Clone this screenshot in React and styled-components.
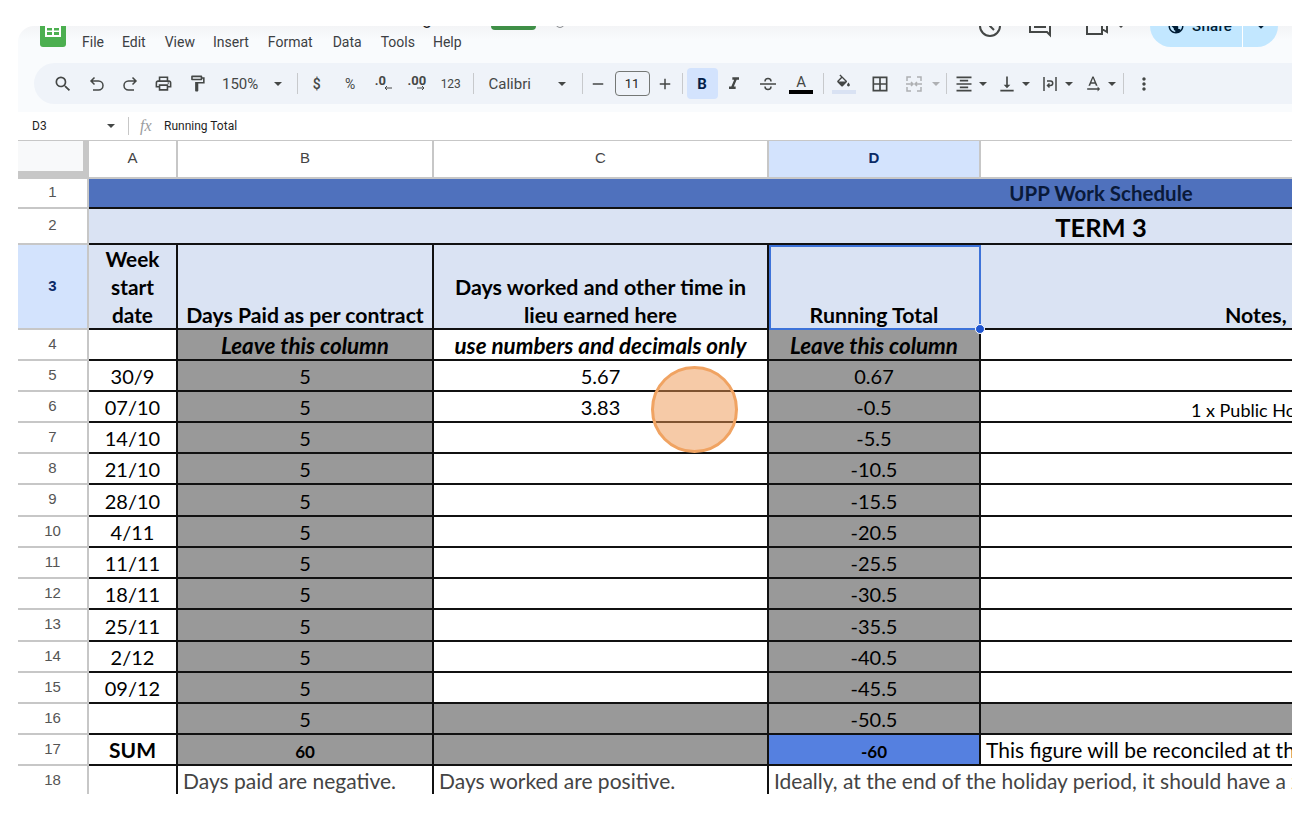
import React from "react";
import styled, { createGlobalStyle } from "styled-components";
import {
  MdSearch, MdOutlineLocalPrintshop, MdOutlineFormatPaint, MdFormatItalic,
  MdBorderAll, MdFormatAlignCenter, MdVerticalAlignBottom, MdTextRotationNone, MdMoreVert,
  MdPublic, MdArrowDropDown, MdRemove, MdAdd,
} from "react-icons/md";

const Global = createGlobalStyle`
  html, body { margin: 0; padding: 0; background: #fff; overflow: hidden; }
  * { box-sizing: border-box; }
`;

const Page = styled.div`
  width: 1292px;
  height: 816px;
  padding: 26px 0 22px 18px;
  background: #fff;
`;
const Frame = styled.div`
  width: 1274px;
  height: 768px;
  overflow: hidden;
  border-radius: 16px 0 0 16px;
  background: #fff;
  display: flex;
  flex-direction: column;
  font-family: Roboto, "Liberation Sans", sans-serif;
  color: #444746;
`;
const Chrome = styled.div`
  height: 86px;
  flex: none;
  background: linear-gradient(#f3f4f6 0, #f9fbfd 14px);
  display: flex;
  flex-direction: column;
`;
const TopBar = styled.div`
  height: 37px;
  display: flex;
  padding: 0 14px 0 22px;
`;
const Logo = styled.svg`
  width: 26px;
  height: 32px;
  margin-top: -11px;
  flex: none;
`;
const TitleBlock = styled.div`
  margin-left: 16px;
  width: 500px;
  display: flex;
  flex-direction: column;
`;
const TitleRow = styled.div`
  height: 7px;
  display: flex;
  align-items: flex-start;
`;
const DocTitle = styled.div`
  width: 350px;
  flex: none;
  margin-top: -20px;
  font-size: 18px;
  line-height: 24px;
  text-align: right;
  color: #1f1f1f;
  white-space: nowrap;
`;
const Badge = styled.div`
  width: 45px;
  height: 24px;
  flex: none;
  margin: -20px 0 0 59px;
  border-radius: 4px;
  background: #3f8f47;
`;
const StatusMark = styled.div`
  width: 10px;
  height: 12px;
  flex: none;
  margin: -10px 0 0 19px;
  border: 1px solid #8a8d90;
  border-radius: 50%;
`;
const MenuRow = styled.nav`
  display: flex;
  font-size: 14px;
  line-height: 18px;
  color: #3c4043;
`;
const MenuItem = styled.span`
  margin-right: ${(p) => p.$gap}px;
`;
const RightCluster = styled.div`
  margin-left: auto;
  height: 42px;
  margin-top: -21px;
  display: flex;
  align-items: center;
`;
const TopIcon = styled.svg`
  width: 24px;
  height: 24px;
  flex: none;
  margin-right: ${(p) => p.$gap}px;
`;
const ShareButton = styled.div`
  width: 128px;
  height: 42px;
  flex: none;
  margin-left: 25px;
  display: flex;
  border-radius: 21px;
  overflow: hidden;
  color: #001d35;
`;
const ShareMain = styled.div`
  width: 93px;
  background: #c2e7ff;
  border-right: 1px solid #fff;
  display: flex;
  align-items: center;
  padding-left: 17px;
  gap: 7px;
  font-size: 15px;
  letter-spacing: 0.3px;
  font-weight: 500;
`;
const ShareCaret = styled.div`
  flex: 1;
  background: #c2e7ff;
  display: flex;
  align-items: center;
  justify-content: center;
`;

const Toolbar = styled.div`
  height: 41px;
  margin: 0 -24px 0 16px;
  padding-left: 11px;
  background: #eff3f9;
  border-radius: 21px 0 0 21px;
  display: flex;
  align-items: center;
  flex: none;
`;
const Tool = styled.div`
  width: ${(p) => p.$w || 33.5}px;
  margin-left: ${(p) => p.$ml || 0}px;
  height: 31px;
  flex: none;
  display: flex;
  align-items: center;
  justify-content: center;
  color: ${(p) => p.$c || "#444746"};
  font-size: ${(p) => p.$fs || 14}px;
  font-weight: ${(p) => p.$fw || 400};
  position: relative;
`;
const Caret = styled.div`
  width: ${(p) => p.$w || 10}px;
  flex: none;
  display: flex;
  justify-content: center;
  &::after {
    content: "";
    border-left: 4px solid transparent;
    border-right: 4px solid transparent;
    border-top: 4.5px solid ${(p) => p.$c || "#444746"};
  }
`;
const Sep = styled.div`
  width: 1px;
  height: 21px;
  flex: none;
  background: #c7c9cc;
  margin: 0 ${(p) => p.$r}px 0 ${(p) => p.$l}px;
`;
const ToolText = styled.div`
  width: ${(p) => p.$w}px;
  margin-left: ${(p) => p.$ml}px;
  flex: none;
  font-size: 15px;
  color: #444746;
  white-space: nowrap;
`;
const FontSizeBox = styled.div`
  width: 35px;
  height: 25px;
  margin-left: 2px;
  flex: none;
  border: 1px solid #747775;
  border-radius: 4px;
  display: flex;
  align-items: center;
  justify-content: center;
  font-size: 13px;
  color: #1f1f1f;
`;
const BoldTool = styled.div`
  width: 31px;
  height: 31px;
  margin-left: 4px;
  flex: none;
  border-radius: 4px;
  background: #d3e3fd;
  color: #041e49;
  display: flex;
  align-items: center;
  justify-content: center;
  font-weight: 700;
  font-size: 15px;
`;
const ColorTool = styled.div`
  width: 33.5px;
  height: 31px;
  flex: none;
  display: flex;
  flex-direction: column;
  align-items: center;
  justify-content: center;
  font-size: 15px;
  line-height: 16px;
  color: #444746;
`;
const ColorBar = styled.div`
  width: ${(p) => p.$w}px;
  height: ${(p) => p.$h}px;
  margin-top: ${(p) => p.$mt}px;
  background: ${(p) => p.$c};
`;
const DecimalText = styled.span`
  font-size: 13px;
  font-weight: 700;
  line-height: 12px;
  margin: -5px 0 0 ${(p) => p.$ml}px;
`;
const SmallArrow = styled.svg`
  position: absolute;
  left: ${(p) => p.$x}px;
  top: 17px;
  width: 8px;
  height: 6px;
`;
const FlipIcon = styled.svg`
  transform: ${(p) => (p.$flip ? "scaleX(-1)" : "none")};
`;

const FormulaBar = styled.div`
  height: 29px;
  flex: none;
  background: #fff;
  border-bottom: 1px solid #c7c7c7;
  display: flex;
  align-items: center;
  font-size: 12px;
  color: #1f1f1f;
`;
const NameBox = styled.div`
  width: 72px;
  margin-left: 14px;
  flex: none;
`;
const FormulaSep = styled.div`
  width: 1px;
  height: 18px;
  flex: none;
  background: #c7c7c7;
  margin: 0 11px 0 10px;
`;
const FxMark = styled.span`
  font-family: "Liberation Serif", serif;
  font-style: italic;
  font-size: 16px;
  color: #9a9c9e;
  width: 24px;
  flex: none;
`;

const Sheet = styled.div`
  display: grid;
  width: 2097px;
  grid-template-columns: 71px 89px 256px 335px 212px 1134px;
  grid-template-rows: 38px 30px 36px 85px 31px 31px 31px 31px 31px 32px 31px 31px 31px 32px 31px 31px 31px 31px 31px;
  position: relative;
  font-family: Lato, Carlito, sans-serif;
  color: #000;
`;
const Corner = styled.div`
  background: #f8f9fa;
  border-right: 6px solid #c7c7c7;
  border-bottom: 8px solid #c7c7c7;
`;
const ColHead = styled.div`
  display: flex;
  align-items: center;
  justify-content: center;
  padding-bottom: 3px;
  font-family: "Liberation Sans", sans-serif;
  font-size: 15px;
  background: ${(p) => (p.$on ? "#d3e3fd" : "#fff")};
  color: ${(p) => (p.$on ? "#0b2a66" : "#444")};
  font-weight: ${(p) => (p.$on ? 700 : 400)};
  border-right: 2px solid #c7c7c7;
  border-bottom: 2px solid #c7c7c7;
`;
const RowHead = styled.div`
  display: flex;
  align-items: center;
  justify-content: center;
  padding-bottom: 3px;
  font-family: "Liberation Sans", sans-serif;
  font-size: 15px;
  background: ${(p) => (p.$on ? "#d3e3fd" : "#fff")};
  color: ${(p) => (p.$on ? "#0b2a66" : "#555")};
  font-weight: ${(p) => (p.$on ? 700 : 400)};
  border-right: 2px solid #c7c7c7;
  border-bottom: 2px solid #c7c7c7;
`;
const Cell = styled.div`
  display: flex;
  align-items: flex-end;
  justify-content: ${(p) => (p.$left ? "flex-start" : "center")};
  text-align: center;
  grid-column: ${(p) => p.$span || "auto"};
  padding-left: ${(p) => p.$pl || 0}px;
  white-space: nowrap;
  background: ${(p) => p.$bg || "#fff"};
  color: ${(p) => p.$c || "#000"};
  font-size: ${(p) => p.$fs || 20}px;
  line-height: ${(p) => p.$lh || 27}px;
  font-weight: ${(p) => (p.$b ? 700 : 400)};
  font-style: ${(p) => (p.$i ? "italic" : "normal")};
  border-right: 2px solid ${(p) => (p.$nr ? "transparent" : "#111")};
  border-bottom: 2px solid ${(p) => (p.$nb ? "transparent" : "#111")};
  overflow: hidden;
`;
const WrappedLines = styled.div`
  line-height: 28px;
  margin-bottom: -1px;
`;
const SelectedCell = styled(Cell)`
  box-shadow: inset 2px 2px 0 #3d73d9;
  border-color: #3d73d9;
  overflow: visible;
  position: relative;
`;
const FillHandle = styled.div`
  position: absolute;
  right: -6px;
  bottom: -6px;
  width: 10px;
  height: 10px;
  border-radius: 50%;
  background: #1f55cf;
  border: 1px solid #fff;
  z-index: 3;
`;
const ClickMarker = styled.div`
  position: absolute;
  left: 633px;
  top: 225px;
  width: 87px;
  height: 87px;
  border-radius: 50%;
  background: rgba(238, 150, 80, 0.5);
  border: 3px solid #f0a362;
  z-index: 4;
`;

const GREY = "#999999";
const PALE = "#dae3f3";
const weeks = [
  ["30/9", "5.67", "0.67"], ["07/10", "3.83", "-0.5"], ["14/10", "", "-5.5"], ["21/10", "", "-10.5"],
  ["28/10", "", "-15.5"], ["4/11", "", "-20.5"], ["11/11", "", "-25.5"], ["18/11", "", "-30.5"],
  ["25/11", "", "-35.5"], ["2/12", "", "-40.5"], ["09/12", "", "-45.5"],
];

const Undo = ({ flip }) => (
  <FlipIcon $flip={flip} width="18" height="18" viewBox="0 0 18 18" fill="none" stroke="#444746" strokeWidth="1.5">
    <path d="M6.5 2.5 3 6l3.5 3.500M3 6h7.500a3.700 3.700 0 0 1 0 9H5" />
  </FlipIcon>
);
const Strike = () => (
  <svg width="20" height="18" viewBox="0 0 20 18" fill="none" stroke="#444746" strokeWidth="1.500">
    <path d="M2 9h16M7 6.500a3 3 0 0 1 6 0M7 11.500a3 3 0 0 0 6 0" />
  </svg>
);
const Bucket = () => (
  <svg width="17" height="15" viewBox="0 0 24 20" fill="#444746">
    <path d="M16.560 8.940 7.620 0 6.210 1.410l2.380 2.380-5.150 5.150c-.59.59-.59 1.540 0 2.120l5.500 5.500c.29.29.68.44 1.060.44s.77-.15 1.060-.44l5.500-5.500c.59-.58.59-1.530 0-2.120zM5.210 10 10 5.210 14.790 10H5.210zM19 11.500s-2 2.170-2 3.500c0 1.100.9 2 2 2s2-.9 2-2c0-1.330-2-3.500-2-3.500z" />
  </svg>
);
const Merge = () => (
  <svg width="18" height="18" viewBox="0 0 18 18" fill="none" stroke="#aeb0b3" strokeWidth="1.500">
    <path d="M6 2H2v4M2 8v2M2 12v4h4M12 2h4v4M16 8v2M16 12v4h-4M3 9h5M6 7l2 2-2 2M15 9h-5M12 7l-2 2 2 2" />
  </svg>
);
const Wrap = () => (
  <svg width="18" height="18" viewBox="0 0 18 18" fill="none" stroke="#444746" strokeWidth="1.500">
    <path d="M3 2v14M15 2v14M6 6h3.500a2.200 2.200 0 0 1 0 4.500H6.500M8.500 8.500l-2 2 2 2" />
  </svg>
);

const menus = [["File", 18], ["Edit", 19], ["View", 18], ["Insert", 19], ["Format", 20], ["Data", 19], ["Tools", 18], ["Help", 0]];

export default function App() {
  return (
    <Page>
      <Global />
      <Frame>
        <Chrome>
          <TopBar>
            <Logo viewBox="0 0 26 32">
              <rect width="26" height="32" rx="3" fill="#4caf50" />
              <rect x="5" y="8" width="16" height="14" fill="#fff" />
              <rect x="7" y="13" width="5" height="2.500" fill="#4caf50" />
              <rect x="14" y="13" width="5" height="2.500" fill="#4caf50" />
              <rect x="7" y="17" width="5" height="3" fill="#4caf50" />
              <rect x="14" y="17" width="5" height="3" fill="#4caf50" />
            </Logo>
            <TitleBlock>
              <TitleRow>
                <DocTitle>Work Schedule Tracking</DocTitle>
                <Badge />
                <StatusMark />
              </TitleRow>
              <MenuRow>
                {menus.map(([m, g]) => (
                  <MenuItem key={m} $gap={g}>{m}</MenuItem>
                ))}
              </MenuRow>
            </TitleBlock>
            <RightCluster>
              <TopIcon $gap={26} viewBox="0 0 24 24" fill="none" stroke="#444746" strokeWidth="2">
                <circle cx="12" cy="12" r="10" /><path d="M12 6v6l4 4" />
              </TopIcon>
              <TopIcon $gap={33} viewBox="0 0 24 24" fill="none" stroke="#444746" strokeWidth="2">
                <path d="M2 3h20v18l-3-3H2zM6 8h12M6 13h12" />
              </TopIcon>
              <TopIcon $gap={8} viewBox="0 0 24 24" fill="none" stroke="#444746" strokeWidth="2">
                <path d="M2 5h15v15H2zM17 10l5-3v11l-5-3" />
              </TopIcon>
              <Caret $w={8} />
              <ShareButton>
                <ShareMain><MdPublic size={18} />Share</ShareMain>
                <ShareCaret><MdArrowDropDown size={22} /></ShareCaret>
              </ShareButton>
            </RightCluster>
          </TopBar>
          <Toolbar>
            <Tool $w={35}><MdSearch size={20} /></Tool>
            <Tool><Undo /></Tool>
            <Tool><Undo flip /></Tool>
            <Tool><MdOutlineLocalPrintshop size={19} /></Tool>
            <Tool><MdOutlineFormatPaint size={19} /></Tool>
            <ToolText $w={48} $ml={8}>150%</ToolText>
            <Caret $w={16} />
            <Sep $l={11} $r={2} />
            <Tool $fs={14} $fw={500}>$</Tool>
            <Tool $fs={14}>%</Tool>
            <Tool>
              <DecimalText $ml={-7}>.0</DecimalText>
              <SmallArrow $x={17} viewBox="0 0 8 6" fill="none" stroke="#444746"><path d="M8 3H1M3 1 1 3l2 2" /></SmallArrow>
            </Tool>
            <Tool>
              <DecimalText $ml={-1}>.00</DecimalText>
              <SmallArrow $x={16} viewBox="0 0 8 6" fill="none" stroke="#444746"><path d="M0 3h7M5 1l2 2-2 2" /></SmallArrow>
            </Tool>
            <Tool $fs={12}>123</Tool>
            <Sep $l={5} $r={0} />
            <ToolText $w={66} $ml={15}>Calibri</ToolText>
            <Caret $w={14} />
            <Sep $l={13} $r={0} />
            <Tool $w={30}><MdRemove size={18} /></Tool>
            <FontSizeBox>11</FontSizeBox>
            <Tool $w={30}><MdAdd size={18} /></Tool>
            <Sep $l={2} $r={0} />
            <BoldTool>B</BoldTool>
            <Tool><MdFormatItalic size={20} /></Tool>
            <Tool><Strike /></Tool>
            <ColorTool>A<ColorBar $w={24} $h={4} $mt={0} $c="#000" /></ColorTool>
            <Sep $l={4.500} $r={3} />
            <Tool $w={34}>
              <ColorTool>
                <Bucket />
                <ColorBar $w={24} $h={4} $mt={1} $c="#d9e2f3" />
              </ColorTool>
            </Tool>
            <Tool $w={34} $ml={2}><MdBorderAll size={20} /></Tool>
            <Tool $w={34}><Merge /></Tool>
            <Caret $c="#aeb0b3" />
            <Sep $l={5} $r={3} />
            <Tool $w={28}><MdFormatAlignCenter size={20} /></Tool>
            <Caret />
            <Tool $w={28} $ml={5}><MdVerticalAlignBottom size={20} /></Tool>
            <Caret />
            <Tool $w={28} $ml={5}><Wrap /></Tool>
            <Caret />
            <Tool $w={28} $ml={5}><MdTextRotationNone size={20} /></Tool>
            <Caret />
            <Sep $l={6} $r={3} />
            <Tool $w={34}><MdMoreVert size={20} /></Tool>
          </Toolbar>
        </Chrome>
        <FormulaBar>
          <NameBox>D3</NameBox>
          <Caret $w={14} />
          <FormulaSep />
          <FxMark>fx</FxMark>
          Running Total
        </FormulaBar>
        <Sheet>
          <Corner />
          <ColHead>A</ColHead>
          <ColHead>B</ColHead>
          <ColHead>C</ColHead>
          <ColHead $on>D</ColHead>
          <ColHead />

          <RowHead>1</RowHead>
          <Cell $span="span 5" $bg="#4f71bd" $b $c="#0a1a3a" $fs={20.500} $lh={27}>UPP Work Schedule</Cell>

          <RowHead>2</RowHead>
          <Cell $span="span 5" $bg={PALE} $b $fs={25.500} $lh={32}>TERM 3</Cell>

          <RowHead $on>3</RowHead>
          <Cell $bg={PALE} $b $fs={20.800}><WrappedLines>Week<br />start<br />date</WrappedLines></Cell>
          <Cell $bg={PALE} $b $fs={21.200} $lh={25}>Days Paid as per contract</Cell>
          <Cell $bg={PALE} $b $fs={21.400}><WrappedLines>Days worked and other time in<br />lieu earned here</WrappedLines></Cell>
          <SelectedCell $bg={PALE} $b $fs={21.300} $lh={25}>Running Total<FillHandle /></SelectedCell>
          <Cell $bg={PALE} $b $fs={21.300} $lh={25} $left $pl={244}>Notes, Information</Cell>

          <RowHead>4</RowHead>
          <Cell />
          <Cell $bg={GREY} $b $i $fs={22.400}>Leave this column</Cell>
          <Cell $b $i $fs={22.400}>use numbers and decimals only</Cell>
          <Cell $bg={GREY} $b $i $fs={22.400}>Leave this column</Cell>
          <Cell />

          {weeks.map(([date, worked, total], i) => (
            <React.Fragment key={date}>
              <RowHead>{i + 5}</RowHead>
              <Cell>{date}</Cell>
              <Cell $bg={GREY}>5</Cell>
              <Cell>{worked}</Cell>
              <Cell $bg={GREY}>{total}</Cell>
              {i === 1 ? <Cell $left $pl={210} $fs={18} $lh={21}>1 x Public Holiday</Cell> : <Cell />}
            </React.Fragment>
          ))}

          <RowHead>16</RowHead>
          <Cell />
          <Cell $bg={GREY}>5</Cell>
          <Cell $bg={GREY} />
          <Cell $bg={GREY}>-50.5</Cell>
          <Cell $bg={GREY} />

          <RowHead>17</RowHead>
          <Cell $b $fs={21} $lh={28}>SUM</Cell>
          <Cell $bg={GREY} $b $fs={17} $lh={24}>60</Cell>
          <Cell $bg={GREY} />
          <Cell $bg="#5580e0" $b $fs={17} $lh={24}>-60</Cell>
          <Cell $left $pl={5} $fs={21} $lh={28}>This figure will be reconciled at the end of the term</Cell>

          <RowHead>18</RowHead>
          <Cell $nb />
          <Cell $nb $left $pl={5} $c="#444" $fs={21} $lh={29}>Days paid are negative.</Cell>
          <Cell $nb $left $pl={5} $c="#444" $fs={21} $lh={29}>Days worked are positive.</Cell>
          <Cell $nb $nr $left $pl={5} $c="#444" $fs={21} $lh={29} $span="span 2">Ideally, at the end of the holiday period, it should have a zero balance</Cell>

          <ClickMarker />
        </Sheet>
      </Frame>
    </Page>
  );
}
